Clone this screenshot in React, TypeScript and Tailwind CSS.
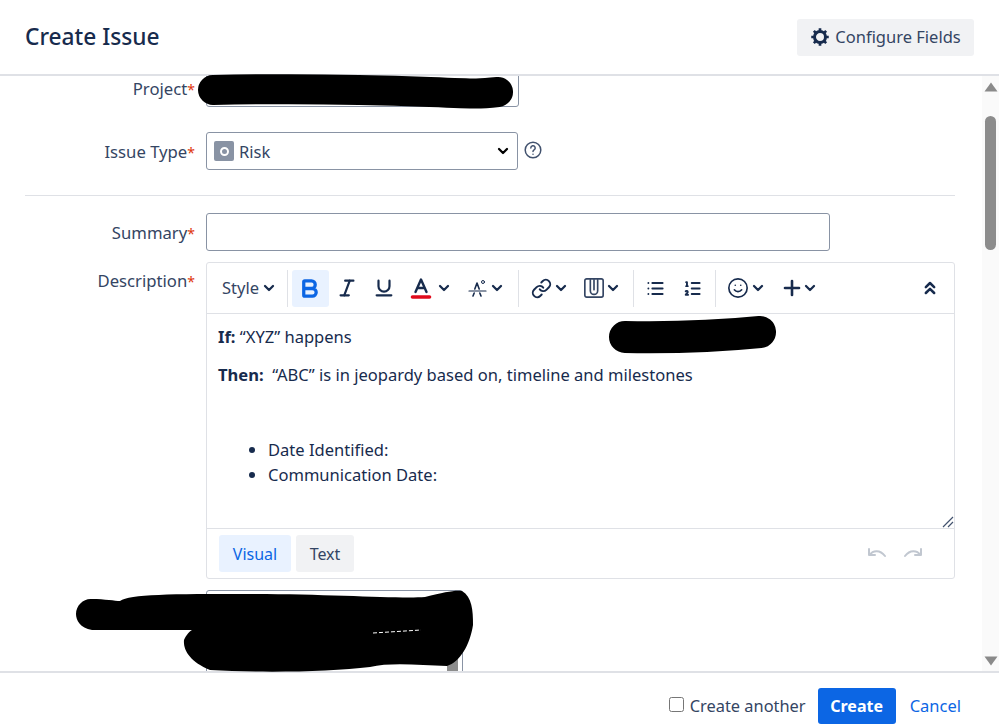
import { Bold, ChevronDown, ChevronsUp, Italic, Link, List, ListOrdered, Plus, Smile, Underline } from "lucide-react";
import type { ReactNode } from "react";

const FONT = "font-['Noto_Sans','Open_Sans',sans-serif]";

function Label({ text, pt }: { text: string; pt: string }) {
  return (
    <div className={`w-[195px] shrink-0 text-right text-[16.7px] leading-[24px] text-[#344563] ${pt}`}>
      {text}
      <span className="text-[14px] text-[#de350b]">*</span>
    </div>
  );
}

function Chevron({ className = "" }: { className?: string }) {
  return <ChevronDown className={`w-[16px] h-[16px] text-[#172b4d] shrink-0 ${className}`} strokeWidth={3.4} />;
}

function ToolButton({ w, pl, active, chevron, children }: { w: string; pl: string; active?: boolean; chevron?: string; children: ReactNode }) {
  return (
    <div className={`h-[37px] shrink-0 flex items-center gap-[3px] rounded-[3px] text-[#172b4d] ${w} ${pl} ${active ? "bg-[#e9f2ff]" : ""}`}>
      {children}
      {chevron !== undefined && <Chevron className={chevron} />}
    </div>
  );
}

function Sep({ mx }: { mx: string }) {
  return <div className={`w-px h-[37px] shrink-0 bg-[#dfe1e6] ${mx}`} />;
}

function GearIcon() {
  return (
    <svg viewBox="0 0 24 24" className="w-[20px] h-[20px]" fill="none" stroke="#172b4d">
      <circle cx="12" cy="12" r="6.6" strokeWidth={3.6} />
      <path d="M12 1.5V5M12 19V22.5M1.5 12H5M19 12H22.5M4.6 4.6 7 7M17 17 19.4 19.4M19.4 4.6 17 7M7 17 4.6 19.4" strokeWidth={3.2} />
    </svg>
  );
}

function FontColorIcon() {
  return (
    <svg viewBox="0 0 24 24" className="w-[24px] h-[24px]" fill="none" strokeWidth={2.4} strokeLinecap="round" strokeLinejoin="round">
      <path d="M6.5 16 12 3.5 17.5 16M8.5 12h7" stroke="#172b4d" />
      <path d="M3.5 21h17" stroke="#e00b1c" strokeWidth={3.6} />
    </svg>
  );
}

function MoreFormatIcon() {
  return (
    <svg viewBox="0 0 20 20" className="w-[20px] h-[20px]" fill="none" stroke="#172b4d" strokeWidth={1.6} strokeLinecap="round" strokeLinejoin="round">
      <path d="M5 18l1.2-3M13 18l-1.2-3M6.8 11 9 5l2.2 6" />
      <path d="M1 13h17" strokeWidth={1.2} />
      <circle cx="15" cy="4" r="1.5" strokeWidth={1} />
    </svg>
  );
}

function AttachIcon() {
  return (
    <svg viewBox="0 0 24 24" className="w-[22px] h-[22px]" fill="none" stroke="#344563" strokeWidth={1.8} strokeLinecap="round" strokeLinejoin="round">
      <rect x="2" y="2" width="20" height="20" rx="2" />
      <path d="M8 3v12a4 4 0 0 0 8 0V3M12 3v11" />
    </svg>
  );
}

function HistoryIcon({ flip }: { flip?: boolean }) {
  return (
    <svg viewBox="0 0 20 14" className={`w-[20px] h-[14px] ${flip ? "-scale-x-100" : ""}`} fill="none" stroke="#c1c7d0" strokeWidth={2} strokeLinecap="round" strokeLinejoin="round">
      <path d="M2 2v6h6M2.5 8C6 3 13 2.5 18 9" />
    </svg>
  );
}

function Triangle({ up }: { up?: boolean }) {
  return (
    <svg viewBox="0 0 14 10" className="w-[14px] h-[10px]">
      <path d={up ? "M7 0.5 13.5 9.5H0.5Z" : "M0.5 0.5H13.5L7 9.5Z"} fill="#8a8a8a" />
    </svg>
  );
}

function Redactions() {
  return (
    <svg className="absolute inset-0 w-full h-full pointer-events-none" viewBox="0 0 999 727">
      <path d="M213 90C300 88 380 90 430 92S480 94 498 92" fill="none" stroke="#000" strokeWidth={30} strokeLinecap="round" />
      <path d="M625 337C680 338 720 336 760 332" fill="none" stroke="#000" strokeWidth={32} strokeLinecap="round" />
      <path d="M92 599C105 599 115 601 120 601C130 594 170 594 250 594C330 594 400 599 425 597C445 592 455 590 462 591C472 597 473 610 473 625C470 645 460 662 447 666C420 665 390 662 370 667C330 672 260 673 210 670C190 662 183 650 184 640C186 635 190 631 192 630H92C80 628 76 620 76 614C76 605 84 598 92 599Z" fill="#000" />
      <path d="M373 633 421 630" stroke="#fff" strokeWidth={1} strokeDasharray="4 2" />
    </svg>
  );
}

export default function App() {
  return (
    <div className={`relative w-[999px] h-[727px] overflow-hidden bg-white flex flex-col text-[#172b4d] ${FONT}`}>
      <div className="h-[76px] shrink-0 border-b-2 border-[#dfe1e6] flex items-center justify-between pl-[25px] pr-[25px]">
        <h1 className="text-[22.7px] font-medium text-[#172b4d] pt-px">Create Issue</h1>
        <div className="h-[37px] w-[177px] bg-[#f1f2f4] rounded-[3px] flex items-center justify-center gap-[5px] text-[16.5px] text-[#344563]">
          <GearIcon />
          Configure Fields
        </div>
      </div>

      <div className="flex-1 min-h-0 flex">
        <div className="flex-1 overflow-hidden">
          <div className="flex gap-[11px] -mt-[7px]">
            <Label text="Project" pt="pt-[8px]" />
            <div className="w-[313px] h-[38px] border border-[#8993a4] rounded-[3px]" />
          </div>

          <div className="flex gap-[11px] mt-[25px]">
            <Label text="Issue Type" pt="pt-[8px]" />
            <div className="w-[312px] h-[38px] border border-[#8993a4] rounded-[3px] flex items-center pl-[7px] pr-[6px] gap-[5px]">
              <div className="w-[20px] h-[20px] rounded-[2px] bg-[#8993a4] flex items-center justify-center">
                <div className="w-[9px] h-[9px] rounded-full border-2 border-white" />
              </div>
              <span className="text-[16.5px] flex-1 text-[#344563] pt-[2px]">Risk</span>
              <ChevronDown className="w-[16px] h-[16px] text-black" strokeWidth={3.4} />
            </div>
            <div className="-ml-[6px] pt-[8px] h-fit">
              <svg viewBox="0 0 20 20" className="w-[20px] h-[20px]" fill="none" stroke="#42526e" strokeWidth={1.5} strokeLinecap="round">
                <circle cx="10" cy="10" r="7.8" />
                <path d="M7.8 8a2.2 2.2 0 1 1 3.3 1.9c-.7.4-1.1.9-1.1 1.6" />
                <path d="M10 14.2v.1" />
              </svg>
            </div>
          </div>

          <div className="h-px w-[930px] ml-[25px] mt-[25px] bg-[#dfe1e6]" />

          <div className="flex gap-[11px] mt-[17px]">
            <Label text="Summary" pt="pt-[8px]" />
            <div className="w-[624px] h-[38px] border border-[#8993a4] rounded-[3px]" />
          </div>

          <div className="flex gap-[11px] mt-[11px]">
            <Label text="Description" pt="pt-[7px]" />
            <div className="w-[749px] h-[317px] border border-[#dfe1e6] rounded-[3px] flex flex-col">
              <div className="h-[51px] shrink-0 border-b border-[#dfe1e6] flex items-center pl-[7px] pr-[6px]">
                <div className="w-[69px] h-[37px] pl-[8px] flex items-center gap-[2px] text-[16.5px] text-[#344563]">
                  Style
                  <Chevron />
                </div>
                <Sep mx="ml-[4px] mr-[4px]" />
                <ToolButton w="w-[37px]" pl="pl-[6px]" active>
                  <Bold className="w-[23px] h-[23px] text-[#0c66e4]" strokeWidth={3.4} />
                </ToolButton>
                <ToolButton w="w-[37px]" pl="pl-[7px]">
                  <Italic className="w-[22px] h-[22px]" strokeWidth={2.4} />
                </ToolButton>
                <ToolButton w="w-[37px]" pl="pl-[7px]">
                  <Underline className="w-[22px] h-[22px]" strokeWidth={2.4} />
                </ToolButton>
                <ToolButton w="w-[52px]" pl="pl-[6px]" chevron="">
                  <FontColorIcon />
                </ToolButton>
                <ToolButton w="w-[63px]" pl="pl-[13px]" chevron="-ml-[2px]">
                  <MoreFormatIcon />
                </ToolButton>
                <Sep mx="ml-0 mr-[5px]" />
                <ToolButton w="w-[54px]" pl="pl-[7px]" chevron="-ml-[2px]">
                  <Link className="w-[21px] h-[21px]" strokeWidth={2.2} />
                </ToolButton>
                <ToolButton w="w-[55px]" pl="pl-[5px]" chevron="-ml-[3px]">
                  <AttachIcon />
                </ToolButton>
                <Sep mx="ml-0 mr-[3px]" />
                <ToolButton w="w-[37px]" pl="pl-[9px]">
                  <List className="w-[19px] h-[19px]" strokeWidth={2.4} />
                </ToolButton>
                <ToolButton w="w-[37px]" pl="pl-[9px]">
                  <ListOrdered className="w-[19px] h-[19px]" strokeWidth={2.4} />
                </ToolButton>
                <Sep mx="ml-[4px] mr-[4px]" />
                <ToolButton w="w-[55px]" pl="pl-[7px]" chevron="-ml-[2px]">
                  <Smile className="w-[22px] h-[22px]" strokeWidth={1.8} />
                </ToolButton>
                <ToolButton w="w-[52px]" pl="pl-[5px]" chevron="-ml-[5px]">
                  <Plus className="w-[24px] h-[24px]" strokeWidth={2.6} />
                </ToolButton>
                <div className="ml-auto w-[37px] h-[37px] flex items-center justify-center">
                  <ChevronsUp className="w-[20px] h-[20px]" strokeWidth={3} />
                </div>
              </div>

              <div className="relative flex-1 min-h-0 pl-[11px] pt-[11px] text-[16.55px] leading-[24px]">
                <p><strong>If:</strong> “XYZ” happens</p>
                <p className="mt-[14px]"><strong>Then:</strong>&nbsp; “ABC” is in jeopardy based on, timeline and milestones</p>
                <ul className="list-disc pl-[50px] mt-[50px] leading-[25px]">
                  <li>Date Identified:</li>
                  <li>Communication Date:</li>
                </ul>
                <svg viewBox="0 0 12 12" className="absolute right-0 bottom-0 w-[12px] h-[12px]" stroke="#42526e" strokeWidth={1.2}>
                  <path d="M1 11 11 1M6 11l5-5" />
                </svg>
              </div>

              <div className="h-[50px] shrink-0 border-t border-[#dfe1e6] flex items-center pl-[12px] pr-[31px] gap-[5px] text-[16px]">
                <div className="w-[72px] h-[37px] bg-[#e9f2ff] rounded-[3px] flex items-center justify-center text-[#0c66e4]">Visual</div>
                <div className="w-[58px] h-[37px] bg-[#f1f2f4] rounded-[3px] flex items-center justify-center text-[#344563]">Text</div>
                <div className="ml-auto flex gap-[16px]">
                  <HistoryIcon />
                  <HistoryIcon flip />
                </div>
              </div>
            </div>
          </div>

          <div className="flex mt-[11px] pl-[206px]">
            <div className="relative w-[257px] h-[120px] border border-[#8993a4] rounded-[3px]">
              <div className="absolute right-[4px] top-[60px] w-[11px] h-[60px] bg-[#8c8c8c]" />
            </div>
          </div>
        </div>

        <div className="w-[17px] shrink-0 bg-[#fafafa] flex flex-col items-center pt-[6px] pb-[5px]">
          <Triangle up />
          <div className="w-[11px] -ml-[1px] h-[134px] rounded-full bg-[#8c8c8c] mt-[24px]" />
          <div className="mt-auto">
            <Triangle />
          </div>
        </div>
      </div>

      <div className="h-[56px] shrink-0 border-t-2 border-[#dfe1e6] flex items-center justify-end pr-[38px] pt-[12px]">
        <input type="checkbox" className="w-[15px] h-[15px] mr-[6px] -mt-[4px]" readOnly />
        <span className="text-[16.4px] text-[#344563]">Create another</span>
        <div className="w-[78px] h-[36px] ml-[12px] bg-[#0c66e4] rounded-[3px] flex items-center justify-center text-white font-bold text-[16px]">Create</div>
        <span className="ml-[14px] text-[16.5px] text-[#0c66e4]">Cancel</span>
      </div>

      <Redactions />
    </div>
  );
}
